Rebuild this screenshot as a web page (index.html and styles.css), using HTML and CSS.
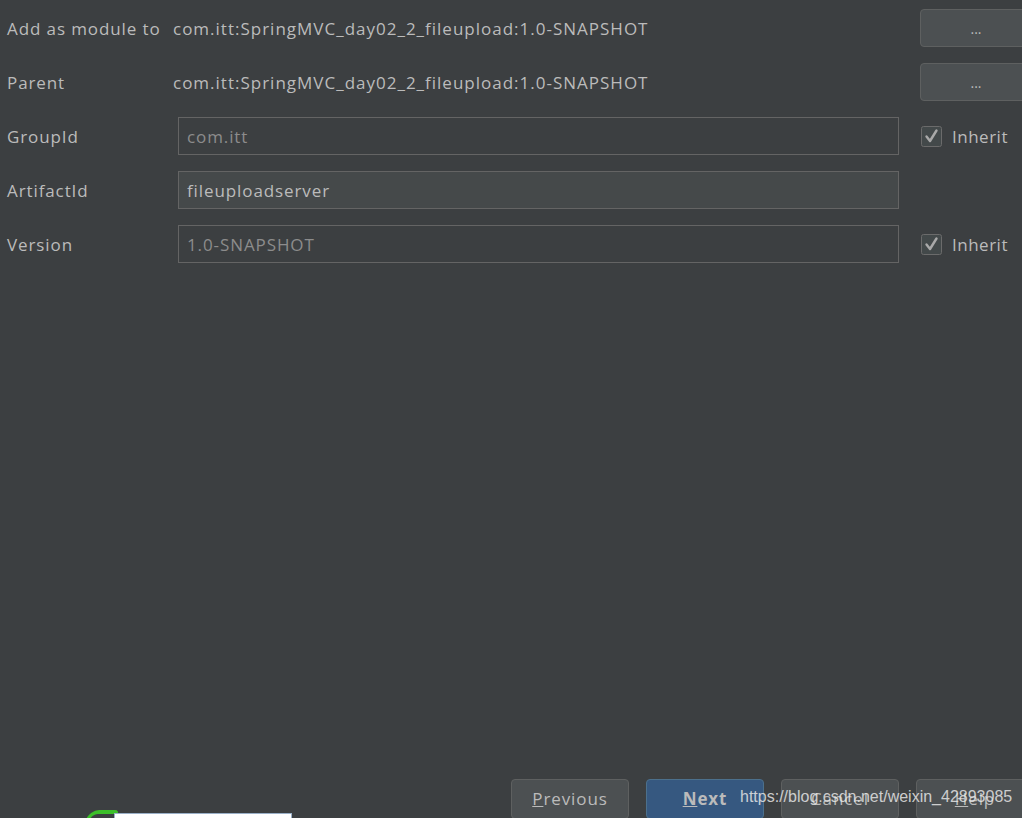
FILE: index.html
```html
<!DOCTYPE html>
<html>
<head>
<meta charset="utf-8">
<link rel="stylesheet" href="styles.css">
</head>
<body>
<div class="form">
  <div class="row">
    <div class="label">Add as module to</div>
    <div class="value">com.itt:SpringMVC_day02_2_fileupload:1.0-SNAPSHOT</div>
    <div class="side"><button class="dots">...</button></div>
  </div>
  <div class="row">
    <div class="label">Parent</div>
    <div class="value">com.itt:SpringMVC_day02_2_fileupload:1.0-SNAPSHOT</div>
    <div class="side"><button class="dots">...</button></div>
  </div>
  <div class="row">
    <div class="label">GroupId</div>
    <div class="field disabled">com.itt</div>
    <div class="side"><span class="check"><svg width="21" height="21" viewBox="0 0 21 21"><rect x="0.5" y="0.5" width="20" height="20" rx="2" fill="#43494a" stroke="#6b6b6b"/><path d="M5.5 10.5 L9 15 L15.5 4.5" fill="none" stroke="#a9a9a9" stroke-width="2.4" stroke-linejoin="round" stroke-linecap="round"/></svg></span><span class="inherit">Inherit</span></div>
  </div>
  <div class="row">
    <div class="label">ArtifactId</div>
    <div class="field active">fileuploadserver</div>
    <div class="side"></div>
  </div>
  <div class="row">
    <div class="label">Version</div>
    <div class="field disabled">1.0-SNAPSHOT</div>
    <div class="side"><span class="check"><svg width="21" height="21" viewBox="0 0 21 21"><rect x="0.5" y="0.5" width="20" height="20" rx="2" fill="#43494a" stroke="#6b6b6b"/><path d="M5.5 10.5 L9 15 L15.5 4.5" fill="none" stroke="#a9a9a9" stroke-width="2.4" stroke-linejoin="round" stroke-linecap="round"/></svg></span><span class="inherit">Inherit</span></div>
  </div>
</div>
<div class="spacer"></div>
<div class="footer">
  <button class="btn"><u>P</u>revious</button>
  <button class="btn primary"><u>N</u>ext</button>
  <button class="btn">Cancel</button>
  <button class="btn"><u>H</u>elp</button>
</div>
<div class="watermark">https://blog.csdn.net/weixin_42893085</div>
<div class="green"></div>
<div class="whitebox"></div>
</body>
</html>
```

FILE: styles.css
```css
html, body {
  margin: 0;
  padding: 0;
  width: 1022px;
  height: 818px;
  overflow: hidden;
  background: #3c3f41;
}
body {
  position: relative;
  display: flex;
  flex-direction: column;
  font-family: "Open Sans", "Noto Sans", sans-serif;
  font-size: 17px;
  letter-spacing: 0.9px;
  color: #bbbbbb;
}
.form {
  padding-top: 1px;
  display: flex;
  flex-direction: column;
}
.row {
  height: 54px;
  display: flex;
  align-items: center;
}
.label {
  width: 171px;
  padding-left: 7px;
  flex: none;
  white-space: nowrap;
}
.value {
  width: 720px;
  margin-left: -5px;
  padding-right: 5px;
  flex: none;
  white-space: nowrap;
  letter-spacing: 1px;
}
.field {
  width: 721px;
  height: 38px;
  box-sizing: border-box;
  border: 1px solid #646464;
  padding: 0 8px;
  display: flex;
  align-items: center;
  flex: none;
}
.field.disabled {
  color: #8c8c8c;
  background: #3c3f41;
}
.field.active {
  background: #45494a;
  color: #bbbbbb;
}
.side {
  margin-left: 22px;
  display: flex;
  align-items: center;
  flex: none;
}
.dots {
  width: 112px;
  height: 38px;
  border: 1px solid #5e6060;
  border-radius: 4px;
  background: #4c5052;
  color: #bbbbbb;
  font-family: "Open Sans", sans-serif;
  font-size: 14px;
  padding: 0;
}
.check {
  display: flex;
  width: 21px;
  height: 21px;
}
.inherit {
  margin-left: 10px;
  letter-spacing: 0.5px;
}
.spacer {
  flex: 1;
}
.footer {
  display: flex;
  gap: 17px;
  padding-left: 511px;
  height: 39px;
  flex: none;
}
.btn {
  width: 118px;
  height: 40px;
  flex: none;
  box-sizing: border-box;
  border: 1px solid #5e6060;
  border-radius: 4px;
  background: #4c5052;
  color: #bbbbbb;
  font-family: "Open Sans", sans-serif;
  font-size: 17px;
  letter-spacing: 0.9px;
  padding: 0 0 2px 0;
}
.btn.primary {
  background: #365880;
  border-color: #4c708c;
  color: #bbbbbb;
  font-weight: bold;
}
.watermark {
  position: absolute;
  left: 740px;
  top: 788px;
  font-family: "Liberation Sans", Arial, sans-serif;
  font-size: 16px;
  letter-spacing: 0;
  color: rgba(230, 230, 230, 0.85);
  white-space: nowrap;
}
.green {
  position: absolute;
  left: 86px;
  top: 810px;
  width: 26px;
  height: 14px;
  border-top: 4px solid #3cbf2a;
  border-left: 4px solid #3cbf2a;
  border-radius: 10px 4px 0 0;
  transform: skewX(-20deg);
}
.whitebox {
  position: absolute;
  left: 114px;
  top: 813px;
  width: 176px;
  height: 10px;
  background: #ffffff;
  border: 1px solid #9ab0c8;
}
```
